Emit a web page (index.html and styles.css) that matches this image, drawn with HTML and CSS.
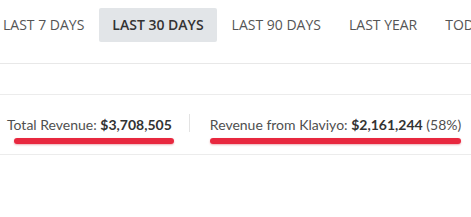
FILE: index.html
```html
<!DOCTYPE html>
<html lang="en">
<head>
    <meta charset="UTF-8">
    <title>Revenue</title>
    <link rel="stylesheet" href="styles.css">
</head>
<body>

<div class="tabs">
    <div class="tab">LAST 7 DAYS</div>
    <div class="tab active">LAST 30 DAYS</div>
    <div class="tab">LAST 90 DAYS</div>
    <div class="tab">LAST YEAR</div>
    <div class="tab">TODAY</div>
</div>

<div class="stats">
    <div class="stat first">
        <div class="stat-text">Total Revenue: <b>$3,708,505</b></div>
        <div class="mark mark-total"></div>
    </div>
    <div class="divider"></div>
    <div class="stat">
        <div class="stat-text">Revenue from Klaviyo: <b>$2,161,244</b> (58%)</div>
        <div class="mark"></div>
    </div>
</div>

</body>
</html>
```

FILE: styles.css
```css
body {
    margin: 0;
    background: #fff;
    font-family: "Open Sans", Arial, sans-serif;
    color: #555;
    overflow: hidden;
}
.tabs {
    display: flex;
    gap: 2px;
    margin-left: -10px;
    padding-top: 8px;
    height: 55px;
    border-bottom: 1px solid #e8e8e8;
    white-space: nowrap;
}
.tab {
    height: 34px;
    line-height: 34px;
    padding: 0 13px;
    font-size: 14px;
    color: #555;
    border-radius: 2px;
}
.tab.active {
    background: #e2e5e8;
    color: #333;
    font-weight: 600;
}
.stats {
    display: flex;
    align-items: center;
    margin-top: 30px;
    height: 59px;
    border-top: 1px solid #ececec;
    border-bottom: 1px solid #ececec;
    white-space: nowrap;
    font-family: Lato, "Open Sans", sans-serif;
}
.stat {
    padding-top: 11px;
}
.stat.first {
    padding-left: 7px;
}
.stat-text {
    font-size: 14px;
    line-height: 18px;
    color: #4f4f4f;
}
.stat-text b {
    color: #333;
    font-weight: 700;
}
.divider {
    width: 1px;
    height: 18px;
    background: #e3e3e3;
    margin: 0 20px 4px 17px;
}
.mark {
    height: 6px;
    margin-top: 4px;
    background: #e8283f;
    border-radius: 3px;
    box-shadow: 0 1px 2px rgba(200, 30, 50, 0.35);
}
.mark-total {
    margin-left: 7px;
    margin-right: -2px;
}
```
